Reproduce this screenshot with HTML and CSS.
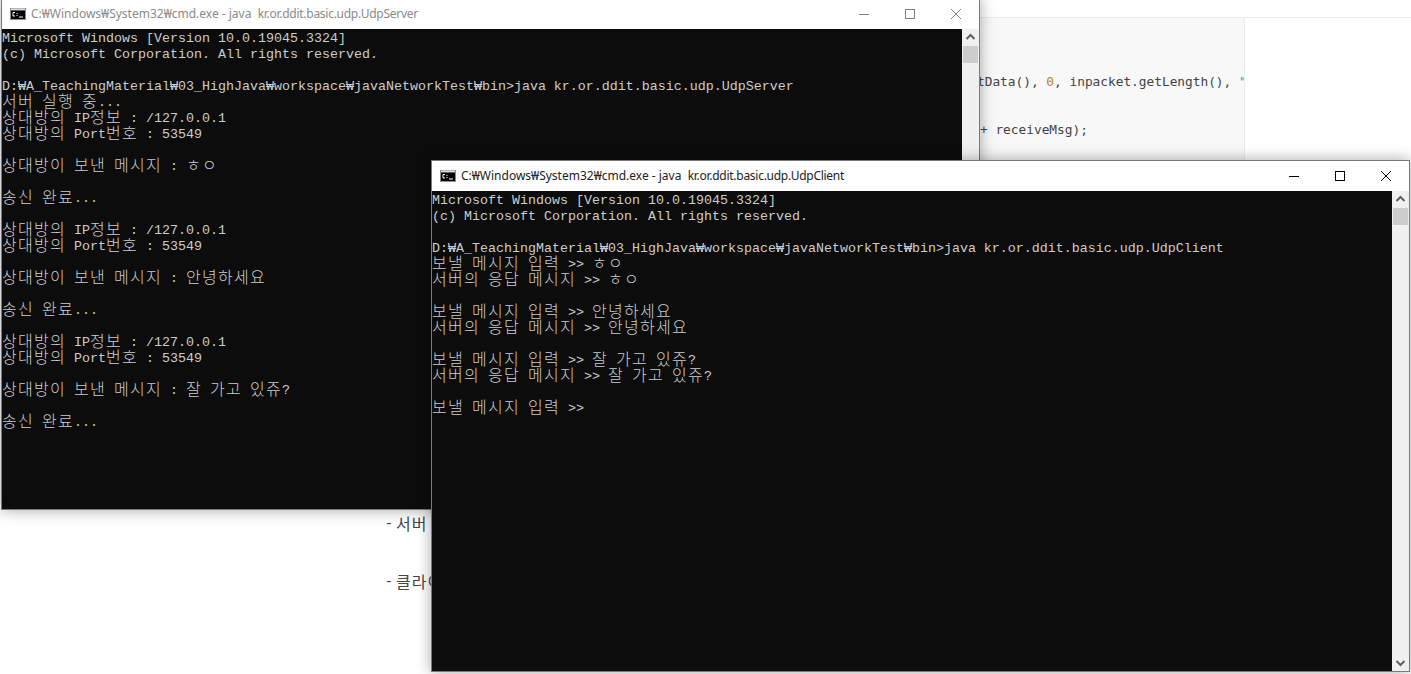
FILE: index.html
```html
<!DOCTYPE html>
<html lang="ko">
<head>
<meta charset="utf-8">
<title>UDP</title>
<link rel="stylesheet" href="styles.css">
</head>
<body>
<main class="doc">
  <div class="doc-top"></div>
  <div class="doc-body">
    <div class="notes">
      <p class="note note-server">- 서버</p>
      <p class="note note-client">- 클라이</p>
    </div>
    <pre class="code"><span class="code-1">tData(), <span class="num">0</span>, inpacket.getLength(), <span class="str">"</span></span>
<span class="code-2">+ receiveMsg);</span></pre>
    <div class="doc-rest"></div>
  </div>
</main>

<section class="win win-server">
  <header class="bar">
    <svg class="ico" viewBox="0 0 16 12" width="16" height="12"><rect width="16" height="12" fill="#8c8c8c"/><rect x="1" y="0.500" width="14" height="2" fill="#d8e0ec"/><rect x="1" y="2.500" width="14" height="8.500" fill="#000"/><path d="M5 4.500H3v3.500h2M7 5v1M7 7v1M9 9h4" stroke="#fff" fill="none"/></svg>
    <span class="ttl"><span class="ttl-cmd">C:₩Windows₩System32₩cmd.exe - java&nbsp; </span><span class="ttl-arg">kr.or.ddit.basic.udp.UdpServer</span></span>
    <div class="btns">
      <svg class="btn" viewBox="0 0 46 30" width="46" height="30"><path d="M18 15.500h10" stroke="#808080"/></svg>
      <svg class="btn" viewBox="0 0 46 30" width="46" height="30"><rect x="18.500" y="10.500" width="9" height="9" fill="none" stroke="#808080"/></svg>
      <svg class="btn" viewBox="0 0 46 30" width="46" height="30"><path d="M18 10l10 10M28 10l-10 10" stroke="#808080" fill="none"/></svg>
    </div>
  </header>
  <div class="main">
<pre class="term">Microsoft Windows [Version 10.0.19045.3324]
(c) Microsoft Corporation. All rights reserved.

D:₩A_TeachingMaterial₩03_HighJava₩workspace₩javaNetworkTest₩bin&gt;java kr.or.ddit.basic.udp.UdpServer
<b>서버</b> <b>실행</b> <b>중</b>...
<b>상대방의</b> IP<b>정보</b> : /127.0.0.1
<b>상대방의</b> Port<b>번호</b> : 53549

<b>상대방이</b> <b>보낸</b> <b>메시지</b> : <b>ㅎㅇ</b>

<b>송신</b> <b>완료</b>...

<b>상대방의</b> IP<b>정보</b> : /127.0.0.1
<b>상대방의</b> Port<b>번호</b> : 53549

<b>상대방이</b> <b>보낸</b> <b>메시지</b> : <b>안녕하세요</b>

<b>송신</b> <b>완료</b>...

<b>상대방의</b> IP<b>정보</b> : /127.0.0.1
<b>상대방의</b> Port<b>번호</b> : 53549

<b>상대방이</b> <b>보낸</b> <b>메시지</b> : <b>잘</b> <b>가고</b> <b>있쥬</b>?

<b>송신</b> <b>완료</b>...</pre>
    <div class="sb">
      <svg class="arr" viewBox="0 0 17 17" width="17" height="17"><path d="M4.500 10l4-4 4 4" fill="none" stroke="#606060" stroke-width="2"/></svg>
      <div class="thumb"></div>
      <div class="track"></div>
      <svg class="arr" viewBox="0 0 17 17" width="17" height="17"><path d="M4.500 7l4 4 4-4" fill="none" stroke="#606060" stroke-width="2"/></svg>
    </div>
  </div>
</section>

<section class="win win-client">
  <header class="bar">
    <svg class="ico" viewBox="0 0 16 12" width="16" height="12"><rect width="16" height="12" fill="#8c8c8c"/><rect x="1" y="0.500" width="14" height="2" fill="#d8e0ec"/><rect x="1" y="2.500" width="14" height="8.500" fill="#000"/><path d="M5 4.500H3v3.500h2M7 5v1M7 7v1M9 9h4" stroke="#fff" fill="none"/></svg>
    <span class="ttl"><span class="ttl-cmd">C:₩Windows₩System32₩cmd.exe - java&nbsp; </span><span class="ttl-arg">kr.or.ddit.basic.udp.UdpClient</span></span>
    <div class="btns">
      <svg class="btn" viewBox="0 0 46 30" width="46" height="30"><path d="M18 15.500h10" stroke="#000"/></svg>
      <svg class="btn" viewBox="0 0 46 30" width="46" height="30"><rect x="18.500" y="10.500" width="9" height="9" fill="none" stroke="#000"/></svg>
      <svg class="btn" viewBox="0 0 46 30" width="46" height="30"><path d="M18 10l10 10M28 10l-10 10" stroke="#000" fill="none"/></svg>
    </div>
  </header>
  <div class="main">
<pre class="term">Microsoft Windows [Version 10.0.19045.3324]
(c) Microsoft Corporation. All rights reserved.

D:₩A_TeachingMaterial₩03_HighJava₩workspace₩javaNetworkTest₩bin&gt;java kr.or.ddit.basic.udp.UdpClient
<b>보낼</b> <b>메시지</b> <b>입력</b> &gt;&gt; <b>ㅎㅇ</b>
<b>서버의</b> <b>응답</b> <b>메시지</b> &gt;&gt; <b>ㅎㅇ</b>

<b>보낼</b> <b>메시지</b> <b>입력</b> &gt;&gt; <b>안녕하세요</b>
<b>서버의</b> <b>응답</b> <b>메시지</b> &gt;&gt; <b>안녕하세요</b>

<b>보낼</b> <b>메시지</b> <b>입력</b> &gt;&gt; <b>잘</b> <b>가고</b> <b>있쥬</b>?
<b>서버의</b> <b>응답</b> <b>메시지</b> &gt;&gt; <b>잘</b> <b>가고</b> <b>있쥬</b>?

<b>보낼</b> <b>메시지</b> <b>입력</b> &gt;&gt;</pre>
    <div class="sb">
      <svg class="arr" viewBox="0 0 17 17" width="17" height="17"><path d="M4.500 10l4-4 4 4" fill="none" stroke="#606060" stroke-width="2"/></svg>
      <div class="thumb"></div>
      <div class="track"></div>
      <svg class="arr" viewBox="0 0 17 17" width="17" height="17"><path d="M4.500 7l4 4 4-4" fill="none" stroke="#606060" stroke-width="2"/></svg>
    </div>
  </div>
</section>
</body>
</html>
```
FILE: styles.css
```css
html, body {
  margin: 0;
  height: 100%;
  overflow: hidden;
  background: #fff;
}
body {
  position: relative;
  width: 1411px;
  height: 674px;
}
.doc {
  display: flex;
  flex-direction: column;
  height: 674px;
}
.doc-top {
  height: 17px;
  border-bottom: 1px solid #ececec;
  flex: none;
}
.doc-body {
  display: flex;
  flex: 1;
}
.notes {
  width: 980px;
  padding-left: 386px;
  box-sizing: border-box;
  flex: none;
}
.note {
  margin: 0;
  font: 16px/20px "Noto Sans CJK KR", sans-serif;
  letter-spacing: 1px;
  word-spacing: -2px;
  color: #444;
}
.note-server { padding-top: 495px; }
.note-client { padding-top: 38px; }
.code {
  margin: 0;
  width: 265px;
  height: 500px;
  flex: none;
  box-sizing: border-box;
  background: #f8f8f8;
  border-right: 1px solid #ececec;
  font: 12.8px/48px "DejaVu Sans Mono", monospace;
  color: #444;
  overflow: hidden;
  padding-top: 40px;
}
.code-1 { margin-left: -3px; }
.num { color: #b8860b; }
.str { color: #3a9a3a; }
.win {
  position: absolute;
  width: 979px;
  height: 512px;
  box-sizing: border-box;
  border: 1px solid #7a7a7a;
  background: #fff;
  box-shadow: 0 0 14px rgba(0, 0, 0, .35);
  display: flex;
  flex-direction: column;
}
.win-server {
  left: 1px;
  top: -2px;
  color: #8a8a8a;
}
.win-client {
  left: 431px;
  top: 160px;
  color: #222;
}
.bar {
  height: 30px;
  flex: none;
  display: flex;
  align-items: center;
  padding-left: 8px;
  background: #fff;
}
.ico {
  flex: none;
  margin-right: 5px;
}
.ttl {
  font: 12px/30px "Noto Sans", sans-serif;
  white-space: nowrap;
  flex: 1;
}
.ttl-arg {
  letter-spacing: -.27px;
}
.btns {
  display: flex;
  flex: none;
}
.btn {
  display: block;
}
.main {
  display: flex;
  height: 480px;
}
.term {
  margin: 0;
  width: 960px;
  height: 480px;
  padding-top: 2px;
  box-sizing: border-box;
  flex: none;
  background: #0c0c0c;
  color: #ccc;
  font: 13.333px/16px "Liberation Mono", "Noto Sans CJK KR", monospace;
  overflow: hidden;
}
.term b {
  font: 300 16px/0 "Noto Sans CJK KR", monospace;
  letter-spacing: 1.28px;
  vertical-align: -1px;
}
.sb {
  width: 17px;
  display: flex;
  flex-direction: column;
  background: #f0f0f0;
}
.arr {
  flex: none;
  display: block;
}
.thumb {
  height: 17px;
  margin: 0 1px;
  background: #cdcdcd;
  flex: none;
}
.track {
  flex: 1;
}
```
